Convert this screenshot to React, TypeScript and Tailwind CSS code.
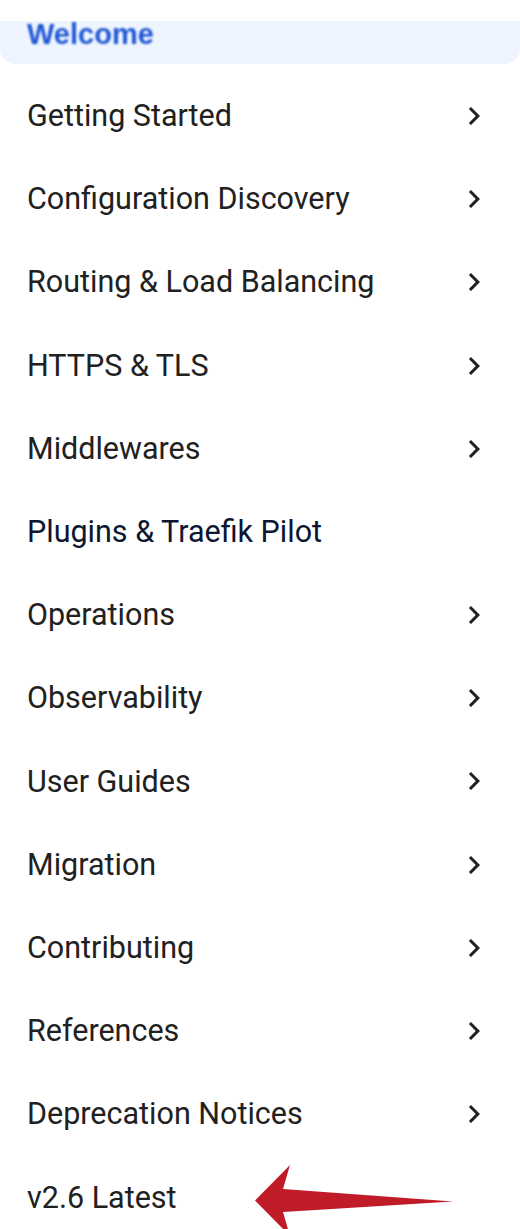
const items = [
    { label: "Getting Started", arrow: true },
    { label: "Configuration Discovery", arrow: true },
    { label: "Routing & Load Balancing", arrow: true },
    { label: "HTTPS & TLS", arrow: true },
    { label: "Middlewares", arrow: true },
    { label: "Plugins & Traefik Pilot", arrow: false },
    { label: "Operations", arrow: true },
    { label: "Observability", arrow: true },
    { label: "User Guides", arrow: true },
    { label: "Migration", arrow: true },
    { label: "Contributing", arrow: true },
    { label: "References", arrow: true },
    { label: "Deprecation Notices", arrow: true },
];

function Chevron() {
    return (
        <svg width="36" height="36" viewBox="0 0 24 24" className="fill-[#212121]">
            <path d="M10 6L8.59 7.41 13.17 12l-4.58 4.59L10 18l6-6z" />
        </svg>
    );
}

export default function App() {
    return (
        <div className="w-[520px] h-[1229px] overflow-hidden bg-white font-['Roboto',sans-serif] relative">
            <div className="pt-[21px]">
                <div className="h-[43px] bg-[#eef5fe] rounded-b-[15px] overflow-hidden relative">
                    <span className="absolute left-[27px] top-[-8px] text-[29px] font-bold text-[#1f56d6] blur-[1px] font-['Liberation_Sans',sans-serif]">
                        Welcome
                    </span>
                </div>
            </div>
            <ul className="mt-[10.4px]">
                {items.map((it) => (
                    <li key={it.label} className="h-[83.2px] flex items-center justify-between pl-[27px] pr-[28px]">
                        <span className={`text-[30.5px] ${it.arrow ? "text-[#212121]" : "text-[#0c1631]"}`}>{it.label}</span>
                        {it.arrow && <Chevron />}
                    </li>
                ))}
                <li className="h-[83.2px] flex items-center pl-[27px] relative">
                    <span className="text-[30.5px] text-[#212121]">v2.6 Latest</span>
                    <svg className="absolute left-[250px] top-0" width="210" height="80" viewBox="250 1156 210 80">
                        <path d="M255 1200.5 L290 1165 L283 1189 L453 1201.5 L283 1212 L290 1236 Z" fill="#c01c28" />
                    </svg>
                </li>
            </ul>
        </div>
    );
}
